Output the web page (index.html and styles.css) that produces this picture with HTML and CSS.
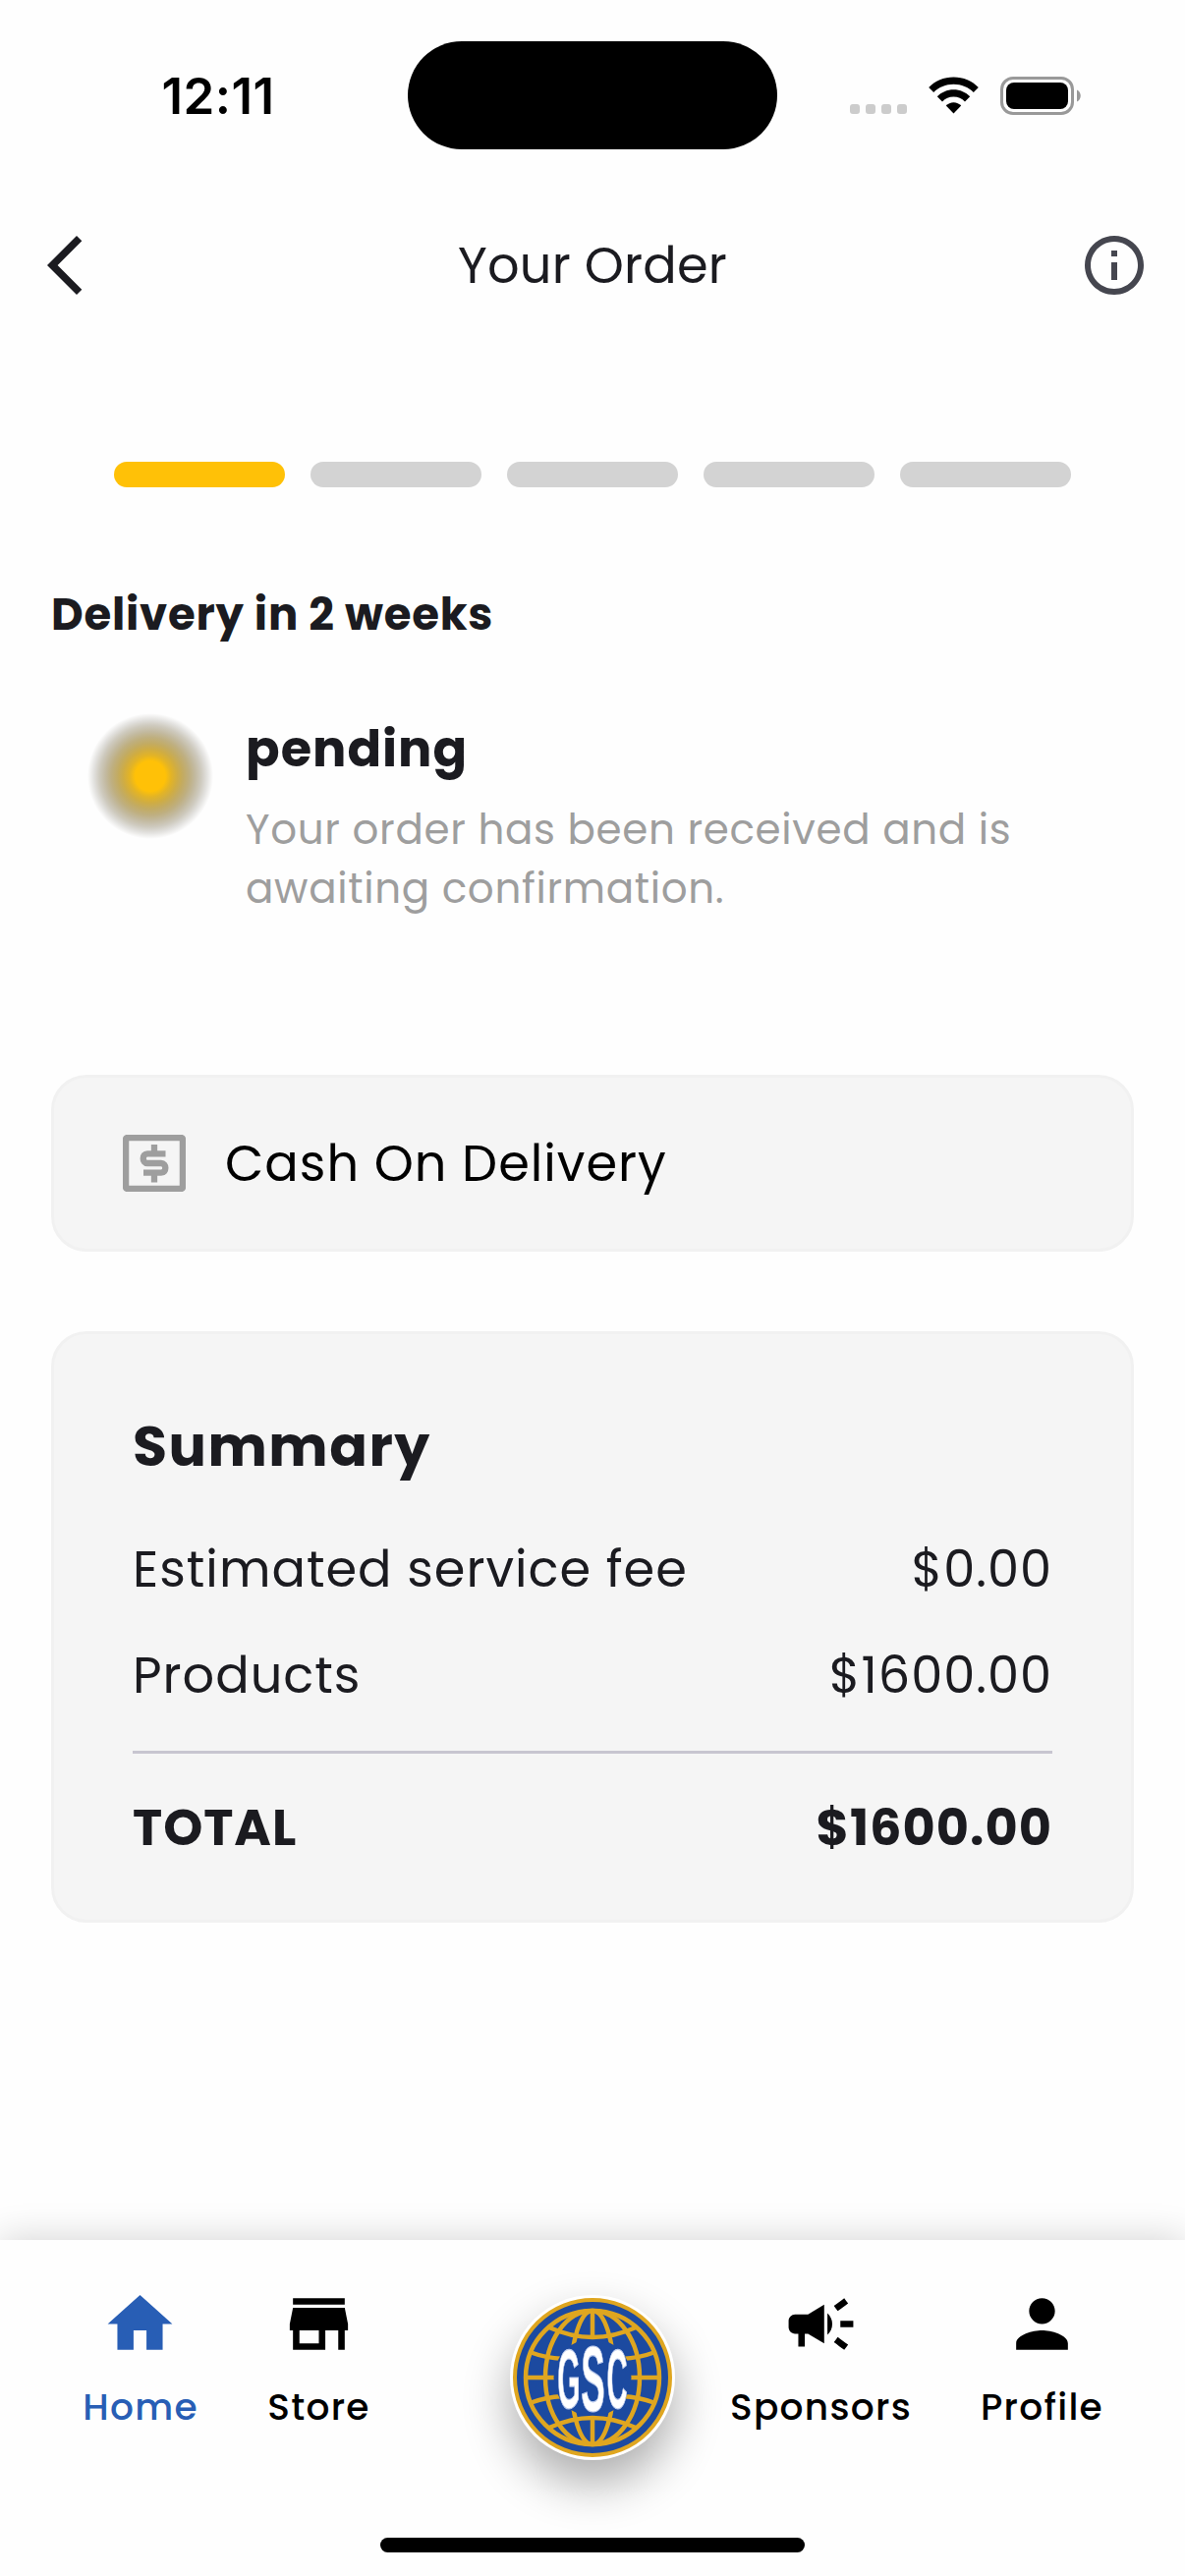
FILE: index.html
```html
<!DOCTYPE html>
<html lang="en">
<head>
  <meta charset="UTF-8" />
  <meta name="viewport" content="width=device-width, initial-scale=1.0"/>
  <title>Your Order</title>
  <link rel="stylesheet" href="styles.css">
</head>
<body>
  <div class="app-container">
    <!-- Status bar -->
    <div class="status-bar">
      <div class="time">12:11</div>
      <div class="island"></div>
      <div class="status-icons">
        <div class="signal"><i></i><i></i><i></i><i></i></div>
        <svg class="wifi" viewBox="0 0 51 38">
          <path d="M25.5 0.5C35.5 0.5 44.5 4.5 50.8 11L45.8 16C40.5 10.8 33.5 7.8 25.5 7.8S10.5 10.8 5.2 16L0.2 11C6.5 4.5 15.5 0.5 25.5 0.5z"/>
          <path d="M25.5 13.3C32 13.3 38 16 42.2 20.3L37 25.4C34 22.4 30 20.6 25.5 20.6S17 22.4 14 25.4L8.8 20.3C13 16 19 13.3 25.5 13.3z"/>
          <path d="M25.5 26.2C28.5 26.2 31.2 27.5 33.2 29.5L25.5 37.5 17.8 29.5C19.8 27.5 22.5 26.2 25.5 26.2z"/>
        </svg>
        <svg class="battery" viewBox="0 0 84 40">
          <rect x="1.5" y="1.5" width="72" height="36" rx="11.5" fill="none" stroke="#999" stroke-width="3"/>
          <rect x="6" y="6" width="63" height="27" rx="8"/>
          <path d="M78 13.5c5 2 5 10 0 12z" fill="#999"/>
        </svg>
      </div>
    </div>

    <header class="navbar">
      <svg class="icon" viewBox="0 0 24 24"><path d="M17.77 3.77L16 2 6 12l10 10 1.77-1.77L9.54 12z"/></svg>
      <h1>Your Order</h1>
      <svg class="icon info" viewBox="0 0 24 24"><path d="M11 7h2v2h-2zm0 4h2v6h-2zm1-9C6.48 2 2 6.48 2 12s4.48 10 10 10 10-4.48 10-10S17.52 2 12 2zm0 18c-4.41 0-8-3.59-8-8s3.59-8 8-8 8 3.59 8 8-3.59 8-8 8z"/></svg>
    </header>

    <main class="main-content">
      <div class="steps">
        <span class="active"></span>
        <span></span>
        <span></span>
        <span></span>
        <span></span>
      </div>
      <h2 class="delivery">Delivery in 2 weeks</h2>
      <div class="order-status">
        <div class="pulse"></div>
        <div>
          <h3>pending</h3>
          <p class="desc">Your order has been received and is<br>awaiting confirmation.</p>
        </div>
      </div>

      <div class="card payment">
        <svg class="cash" viewBox="0 0 64 58">
          <rect x="3.1" y="3.1" width="57.8" height="51.8" rx="1"/>
          <path d="M32 10v9M32 39v9.5M43.5 19.3H25C19.3 19.3 19.3 29 25 29H39C44.8 29 44.8 38.7 39 38.7H21"/>
        </svg>
        <span>Cash On Delivery</span>
      </div>

      <div class="card summary">
        <h3>Summary</h3>
        <div class="row"><span>Estimated service fee</span><span>$0.00</span></div>
        <div class="row"><span>Products</span><span>$1600.00</span></div>
        <div class="divider"></div>
        <div class="row total"><span>TOTAL</span><span>$1600.00</span></div>
      </div>
    </main>

    <!-- Bottom navigation -->
    <nav class="tab-bar">
      <a class="tab home active">
        <svg viewBox="0 0 24 24"><path d="M10 20v-6h4v6h5v-8h3L12 3 2 12h3v8z"/></svg>
        <span>Home</span>
      </a>
      <a class="tab store">
        <svg viewBox="0 0 24 24"><path d="M20 4H4v2h16V4zm1 10v-2l-1-5H4l-1 5v2h1v6h10v-6h4v6h2v-6h1zm-9 4H6v-4h6v4z"/></svg>
        <span>Store</span>
      </a>
      <a class="logo">
        <svg viewBox="-84 -84 168 168">
          <circle r="79" class="ring"/>
          <g class="globe">
            <circle r="68"/>
            <ellipse rx="48" ry="68"/>
            <ellipse rx="22" ry="68"/>
            <path d="M0-68V68M-68 0H68M-64-26Q-48-20-30-19M64-26Q48-20 30-19M-64 26Q-48 20-30 19M64 26Q48 20 30 19"/>
          </g>
          <circle r="39.5" class="center"/>
          <path class="globe" d="M-44-51Q0-31 44-51M-44 51Q0 31 44 51"/>
          <g class="letters">
            <text transform="translate(-24 31) scale(.35 1)" font-size="86">G</text>
            <text transform="translate(0.5 34) scale(.39 1)" font-size="94">S</text>
            <text transform="translate(25 31) scale(.34 1)" font-size="86">C</text>
          </g>
        </svg>
      </a>
      <a class="tab sponsors">
        <svg viewBox="0 0 24 24"><path d="M18 11v2h4v-2h-4zm-2 6.61c.96.71 2.21 1.65 3.2 2.39.4-.53.8-1.07 1.2-1.6-.99-.74-2.24-1.68-3.2-2.4-.4.54-.8 1.08-1.2 1.61zM20.4 5.6c-.4-.53-.8-1.07-1.2-1.6-.99.74-2.24 1.68-3.2 2.4.4.53.8 1.07 1.2 1.6.96-.72 2.21-1.65 3.2-2.4zM4 9c-1.1 0-2 .9-2 2v2c0 1.1.9 2 2 2h1v4h2v-4h1l5 3V6L8 9H4zm11.5 3c0-1.33-.58-2.53-1.5-3.35v6.69c.92-.81 1.5-2.01 1.5-3.34z"/></svg>
        <span>Sponsors</span>
      </a>
      <a class="tab profile">
        <svg viewBox="0 0 24 24"><path d="M12 12c2.21 0 4-1.79 4-4s-1.79-4-4-4-4 1.79-4 4 1.79 4 4 4zm0 2c-2.67 0-8 1.34-8 4v2h16v-2c0-2.66-5.33-4-8-4z"/></svg>
        <span>Profile</span>
      </a>
      <div class="home-indicator"></div>
    </nav>
  </div>
</body>
</html>
```
FILE: styles.css
```css
* { margin: 0; padding: 0; box-sizing: border-box; }
body {
  background-color: #fefefe;
  color: #1b1b20;
  font-family: Poppins, Inter, sans-serif;
}
span, h1, h2, h3, p { white-space: nowrap; }

.app-container {
  display: flex;
  flex-direction: column;
  width: 1206px;
  height: 2622px;
  overflow: hidden;
}

/* status bar */
.status-bar {
  display: grid;
  grid-template-columns: 415px 376px 1fr;
  align-items: center;
  height: 194px;
  color: #000;
}
.time {
  padding-left: 29px;
  text-align: center;
  font-family: Inter, sans-serif;
  font-size: 51px;
  font-weight: 600;
  letter-spacing: .5px;
}
.island { height: 110px; border-radius: 55px; background: #000; }
.status-icons { display: flex; align-items: center; padding-left: 74px; }
.signal { display: flex; gap: 6px; margin-top: 28px; }
.signal i { width: 10px; height: 10px; border-radius: 3px; background: #ccc; }
.wifi { width: 51px; height: 38px; margin-left: 22px; }
.battery { width: 84px; height: 40px; margin-left: 22px; margin-top: 2px; }

.navbar {
  display: flex;
  justify-content: space-between;
  align-items: center;
  height: 152px;
  padding: 0 36px 0 30px;
}
.icon { width: 72px; height: 72px; fill: #1b1b20; }
.icon.info { fill: #45464f; }
h1 { margin-left: 6px; font-size: 51px; font-weight: 400; letter-spacing: .2px; }

.main-content { padding: 124px 52px 0; }

.steps { display: flex; gap: 26px; padding: 0 64px; }
.steps span { flex: 1; height: 26px; border-radius: 13px; background: #d3d3d3; }
.steps .active { background: #ffc107; }

.delivery { margin-top: 97px; font-size: 45px; line-height: 66px; letter-spacing: .75px; }

.order-status { display: flex; margin-top: 64px; padding-left: 37px; }
.pulse {
  width: 128px;
  height: 128px;
  margin: 3px 33px 0 0;
  border-radius: 50%;
  background: radial-gradient(closest-side,
    #ffc107 24%,
    rgba(223, 169, 6, .875) 33%,
    rgba(191, 145, 5, .75) 43%,
    rgba(159, 121, 4, .625) 52%,
    rgba(128, 97, 4, .5) 62%,
    rgba(96, 72, 3, .375) 71%,
    rgba(64, 48, 2, .25) 81%,
    rgba(32, 24, 1, .125) 90%,
    rgba(0, 0, 0, 0) 100%);
}
.order-status h3 { font-size: 51px; line-height: 78px; letter-spacing: 1px; }
.desc { margin-top: 14px; color: #9e9e9e; font-size: 42px; line-height: 60px; letter-spacing: .67px; }

.card {
  border: 3px solid #f1f1f1;
  border-radius: 36px;
  background: #f5f5f5;
}
.payment {
  display: flex;
  align-items: center;
  height: 180px;
  margin-top: 159px;
  padding-left: 70px;
  color: #000;
  font-size: 51px;
  letter-spacing: 1px;
}
.cash { width: 64px; height: 58px; margin-right: 40px; fill: none; stroke: #9e9e9e; stroke-width: 6.3; }

.summary { height: 602px; margin-top: 81px; padding: 72px 80px 0; }
.summary h3 { font-size: 57px; line-height: 84px; letter-spacing: 1.5px; }
.row {
  display: flex;
  justify-content: space-between;
  margin-top: 34px;
  font-size: 51px;
  line-height: 74px;
  letter-spacing: 1px;
}
h3 + .row { margin-top: 46px; }
.divider { height: 3px; margin-top: 40px; background: #c7c5d0; }
.row.total { margin-top: 38px; font-weight: 700; }

/* bottom navigation */
.tab-bar {
  position: relative;
  display: flex;
  align-items: flex-start;
  height: 342px;
  margin-top: auto;
  padding: 46px 0 0 84px;
  background: #fefefe;
  box-shadow: 0 0 36px rgba(0, 0, 0, .18);
}
.tab {
  display: flex;
  flex-direction: column;
  align-items: center;
  color: #000;
  fill: #000;
  font-size: 37.5px;
  font-weight: 500;
  line-height: 54px;
  letter-spacing: 1.3px;
}
.tab svg { width: 79px; height: 79px; margin-bottom: 18px; }
.tab span { padding-left: 1px; }
.tab.active { color: #285eb5; fill: #285eb5; }
.home { width: 117px; }
.store { width: 102px; margin-left: 72px; }
.sponsors { width: 186px; margin-left: 55px; }
.profile { width: 124px; margin-left: 70px; }

.logo {
  width: 168px;
  height: 168px;
  margin: 10px 0 0 144px;
  border-radius: 50%;
  background: #fff;
  box-shadow: 0 24px 48px rgba(0, 0, 0, .32);
}
.logo svg { display: block; }
.ring { fill: #1c4aa0; stroke: #dfa620; stroke-width: 4; }
.globe { fill: none; stroke: #dfa620; stroke-width: 4.5; }
.center { fill: #1c4aa0; }
.letters {
  fill: #fff;
  stroke: #b9c8ea;
  stroke-width: 1.2;
  font-family: "Liberation Sans", sans-serif;
  font-weight: 700;
  text-anchor: middle;
}

.home-indicator {
  position: absolute;
  left: 387px;
  bottom: 24px;
  width: 432px;
  height: 15px;
  border-radius: 8px;
  background: #000;
}
```
